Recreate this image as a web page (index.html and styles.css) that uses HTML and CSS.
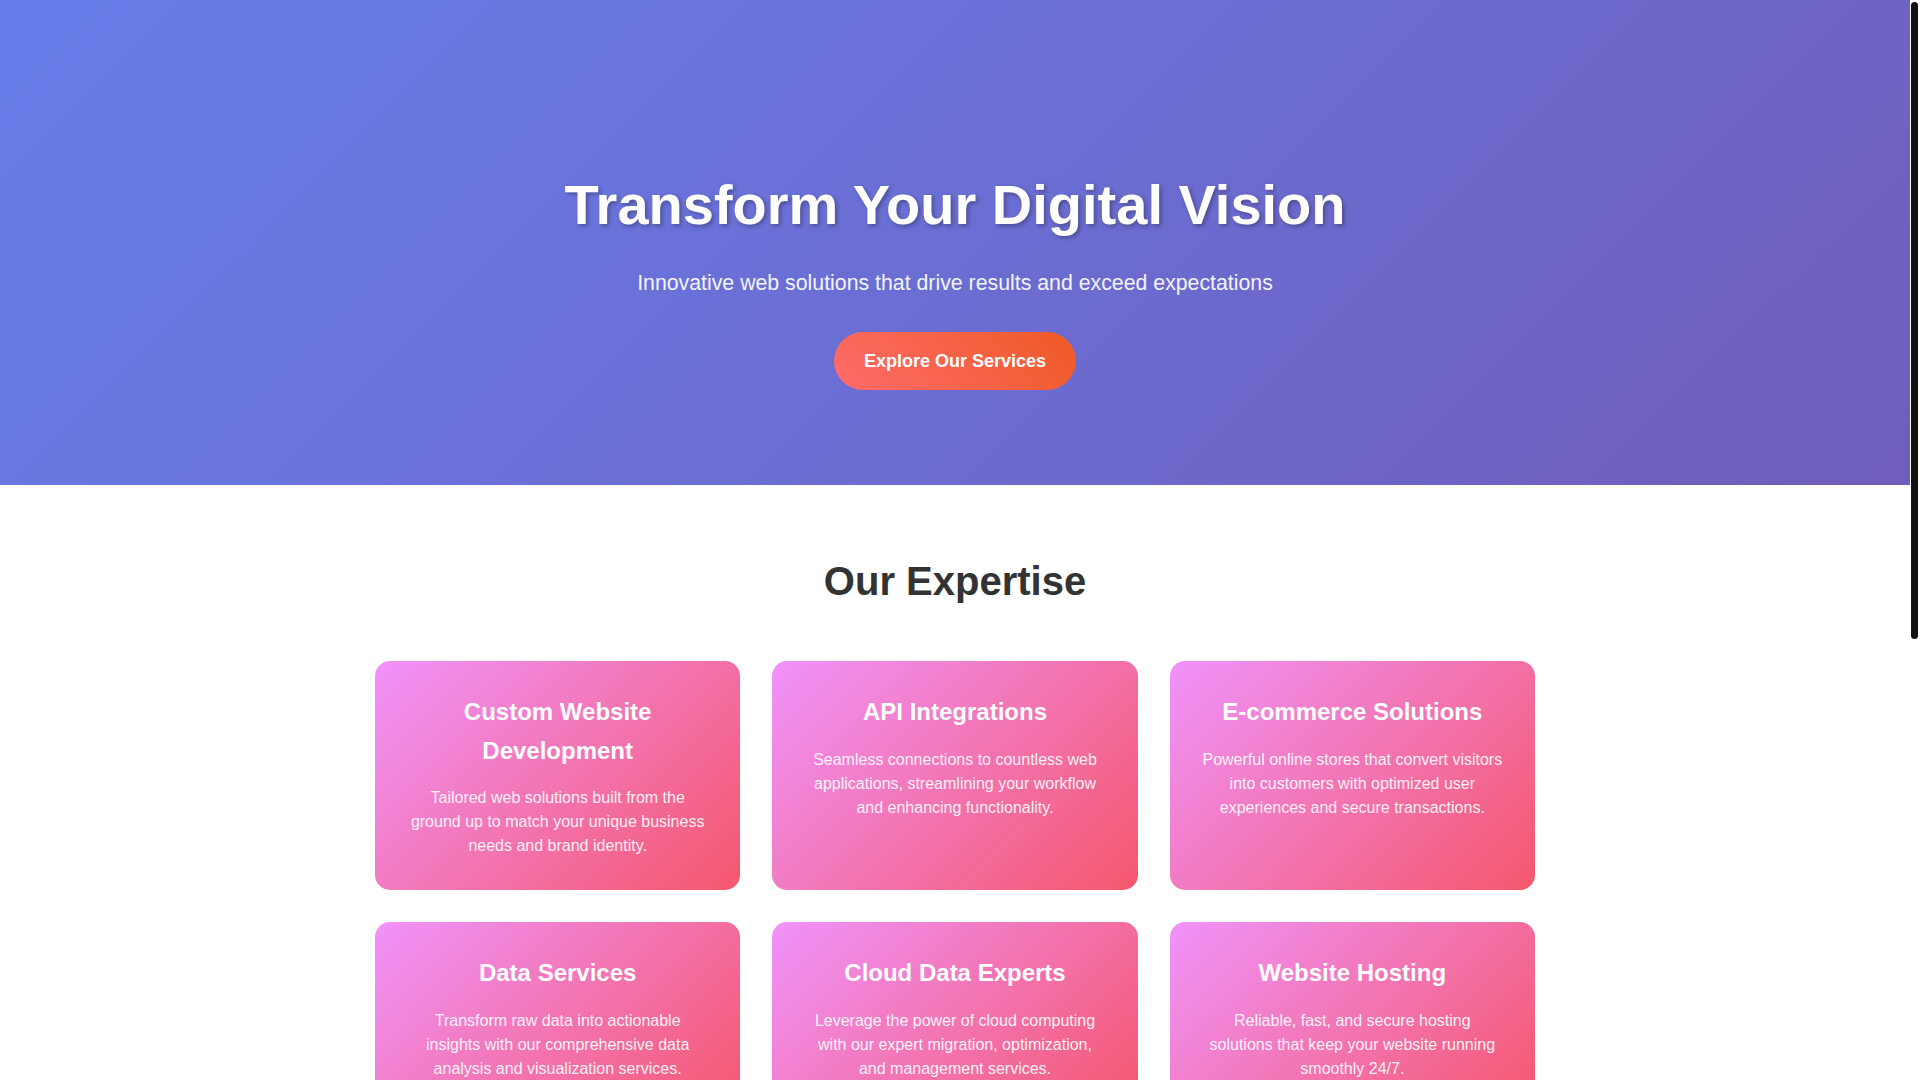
FILE: index.html
```html
<!DOCTYPE html>
<html lang="en">
<head>
<meta charset="utf-8">
<title>Transform Your Digital Vision</title>
<link rel="stylesheet" href="styles.css">
</head>
<body>
<div class="scroll-thumb" aria-hidden="true"></div>
<div class="page">
<section class="hero">
  <h1 class="hero-title">Transform Your Digital Vision</h1>
  <p class="hero-subtitle">Innovative web solutions that drive results and exceed expectations</p>
  <a href="#services" class="btn-primary">Explore Our Services</a>
</section>

<section class="services" id="services">
  <h2 class="section-title">Our Expertise</h2>
  <div class="services-grid">
    <article class="service-card">
      <h3>Custom Website Development</h3>
      <p>Tailored web solutions built from the ground up to match your unique business needs and brand identity.</p>
    </article>
    <article class="service-card">
      <h3>API Integrations</h3>
      <p>Seamless connections to countless web applications, streamlining your workflow and enhancing functionality.</p>
    </article>
    <article class="service-card">
      <h3>E-commerce Solutions</h3>
      <p>Powerful online stores that convert visitors into customers with optimized user experiences and secure transactions.</p>
    </article>
    <article class="service-card">
      <h3>Data Services</h3>
      <p>Transform raw data into actionable insights with our comprehensive data analysis and visualization services.</p>
    </article>
    <article class="service-card">
      <h3>Cloud Data Experts</h3>
      <p>Leverage the power of cloud computing with our expert migration, optimization, and management services.</p>
    </article>
    <article class="service-card">
      <h3>Website Hosting</h3>
      <p>Reliable, fast, and secure hosting solutions that keep your website running smoothly 24/7.</p>
    </article>
  </div>
</section>

<section class="cta">
  <h2 class="cta-title">Ready to Start Your Project?</h2>
  <p class="cta-text">Let's build something remarkable together.</p>
  <a href="#contact" class="btn-primary">Get in Touch</a>
</section>

<footer class="footer">
  <h4 class="footer-brand">Digital Vision Studio</h4>
  <p class="footer-text">Crafting modern web experiences for growing businesses.</p>
  <ul class="footer-links">
    <li><a href="#services">Services</a></li>
    <li><a href="#about">About</a></li>
    <li><a href="#contact">Contact</a></li>
  </ul>
  <p class="footer-copy">&copy; 2024 Digital Vision Studio. All rights reserved.</p>
</footer>
</div>
</body>
</html>
```

FILE: styles.css
```css
* {
  box-sizing: border-box;
}

html,
body {
  margin: 0;
  padding: 0;
}

body {
  font-family: "Liberation Sans", Arial, sans-serif;
  line-height: 1.6;
  color: #333;
  background: #fff;
}

.page {
  margin-right: 10px;
}

.scroll-thumb {
  position: fixed;
  top: 2px;
  right: 2px;
  width: 7px;
  height: 637px;
  background: #111;
  border-radius: 4px;
  z-index: 10;
}

/* Hero */
.hero {
  background: linear-gradient(135deg, #667eea 0%, #764ba2 100%);
  background-size: 100% 1825px;
  background-repeat: no-repeat;
  color: #fff;
  text-align: center;
  padding: 160px 2rem 95px;
}

.hero-title {
  font-size: 3.5rem;
  font-weight: 700;
  line-height: 1.6;
  margin: 0 0 1rem;
  text-shadow: 2px 2px 4px rgba(0, 0, 0, 0.3);
}

.hero-subtitle {
  font-size: 21.3px;
  margin: 0 0 2rem;
  opacity: 0.92;
}

.btn-primary {
  display: inline-block;
  padding: 15px 30px;
  font-size: 18px;
  font-weight: 700;
  color: #fff;
  text-decoration: none;
  border-radius: 50px;
  background: linear-gradient(45deg, #ff6b6b, #ee5a24);
}

/* Services */
.services {
  padding: 4rem 0;
  background: #fff;
}

.section-title {
  font-size: 2.5rem;
  font-weight: 700;
  text-align: center;
  color: #333;
  margin: 0 0 3rem;
}

.services-grid {
  max-width: 1200px;
  margin: 0 auto;
  padding: 0 20px;
  display: grid;
  grid-template-columns: repeat(3, 1fr);
  gap: 2rem;
}

.service-card {
  background: linear-gradient(135deg, #f093fb 0%, #f5576c 100%);
  border-radius: 15px;
  padding: 2rem;
  color: #fff;
  text-align: center;
}

.service-card h3 {
  font-size: 1.5rem;
  font-weight: 700;
  margin: 0 0 1rem;
}

.service-card p {
  margin: 0;
  line-height: 1.5;
  opacity: 0.9;
}

/* CTA */
.cta {
  padding: 5rem 2rem;
  text-align: center;
  background: #f8f9fa;
}

.cta-title {
  font-size: 2.5rem;
  margin: 0 0 1rem;
  color: #333;
}

.cta-text {
  font-size: 1.1rem;
  margin: 0 0 2rem;
  color: #555;
}

/* Footer */
.footer {
  background: #333;
  color: #fff;
  text-align: center;
  padding: 3rem 2rem;
}

.footer-brand {
  font-size: 1.25rem;
  margin: 0 0 0.5rem;
}

.footer-text {
  margin: 0 0 1rem;
  opacity: 0.8;
}

.footer-links {
  list-style: none;
  margin: 0 0 1rem;
  padding: 0;
  display: flex;
  justify-content: center;
  gap: 2rem;
}

.footer-links a {
  color: #fff;
  text-decoration: none;
}

.footer-copy {
  font-size: 14px;
  margin: 0;
  opacity: 0.6;
}
```
